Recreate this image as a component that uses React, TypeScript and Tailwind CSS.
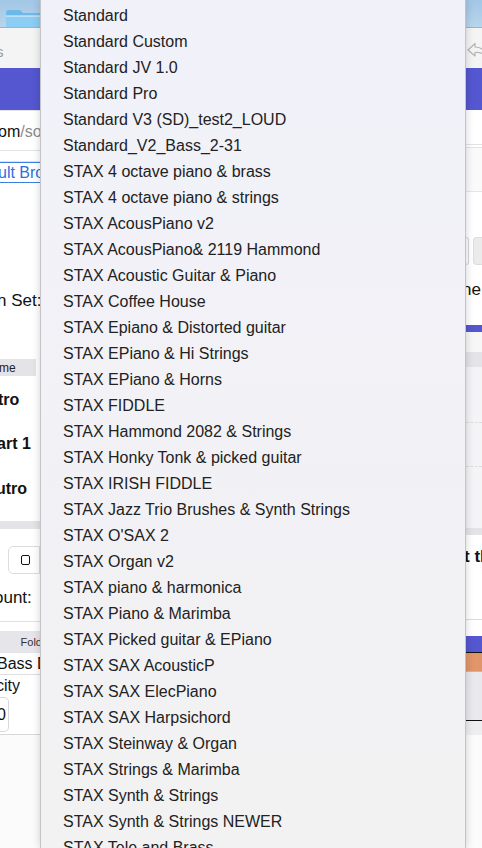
import React from "react";

const items = [
  "Standard",
  "Standard Custom",
  "Standard JV 1.0",
  "Standard Pro",
  "Standard V3 (SD)_test2_LOUD",
  "Standard_V2_Bass_2-31",
  "STAX 4 octave piano & brass",
  "STAX 4 octave piano & strings",
  "STAX AcousPiano v2",
  "STAX AcousPiano& 2119 Hammond",
  "STAX Acoustic Guitar & Piano",
  "STAX Coffee House",
  "STAX Epiano & Distorted guitar",
  "STAX EPiano & Hi Strings",
  "STAX EPiano & Horns",
  "STAX FIDDLE",
  "STAX Hammond 2082 & Strings",
  "STAX Honky Tonk & picked guitar",
  "STAX IRISH FIDDLE",
  "STAX Jazz Trio Brushes & Synth Strings",
  "STAX O'SAX 2",
  "STAX Organ v2",
  "STAX piano & harmonica",
  "STAX Piano & Marimba",
  "STAX Picked guitar & EPiano",
  "STAX SAX AcousticP",
  "STAX SAX ElecPiano",
  "STAX SAX Harpsichord",
  "STAX Steinway & Organ",
  "STAX Strings & Marimba",
  "STAX Synth & Strings",
  "STAX Synth & Strings NEWER",
  "STAX Tele and Brass",
];

function LeftStrip() {
  return (
    <div className="w-[40px] shrink-0 flex flex-col overflow-hidden bg-white text-[16px] text-[#111] whitespace-nowrap">
      <div className="h-[28px] shrink-0 bg-gradient-to-b from-[#a2c6e5] to-[#b8d5eb] border-b border-[#9bb3c6] flex items-end pl-[6px] overflow-hidden">
        <svg width="40" height="17" viewBox="0 0 40 17" className="shrink-0">
          <path d="M0 3 Q0 0 3 0 L14 0 L17 3 L40 3 L40 17 L0 17 Z" fill="#6db8ea" />
          <path d="M0 6 L40 6 L40 17 L0 17 Z" fill="#8ccdf4" />
          <path d="M0 6 L40 6" stroke="#e6f4fc" strokeWidth="1" />
        </svg>
      </div>
      <div className="h-[40px] shrink-0 bg-[#f4f4f4] flex items-end pb-[5px]">
        <span className="-ml-[4px] text-[15px] text-[#9a9a9a]">s</span>
      </div>
      <div className="h-[42px] shrink-0 bg-[#5457cf]" />
      <div className="h-[40px] shrink-0 border-t border-[#e4e4e4] flex items-center pt-[2px]">
        <span className="-ml-[2px]">om<span className="text-[#8a8a8a]">/son</span></span>
      </div>
      <div className="h-[12px] shrink-0 border-t border-[#e2e2e2] border-b border-b-[#e2e2e2]" />
      <div className="h-[21px] shrink-0 border-y border-[#3b7fe0] flex items-center">
        <span className="-ml-[2px] text-[#2f6fdc]">ult Brow</span>
      </div>
      <div className="h-[103px] shrink-0 bg-white" />
      <div className="h-[30px] shrink-0 flex items-center">
        <span className="-ml-[3px] text-[17px]">n Set:</span>
      </div>
      <div className="h-[43px] shrink-0" />
      <div className="h-[17px] shrink-0 bg-[#e3e3e8] w-[36px] flex items-center">
        <span className="-ml-[1px] text-[12px] text-[#222]">me</span>
      </div>
      <div className="h-[145px] shrink-0 flex flex-col pt-[12px] font-bold">
        <div className="h-[46px] -ml-[2px]">tro</div>
        <div className="h-[46px] -ml-[3px]">art 1</div>
        <div className="h-[46px] -ml-[4px]">utro</div>
      </div>
      <div className="h-[8px] shrink-0 bg-[#e3e3e8]" />
      <div className="h-[17px] shrink-0" />
      <div className="h-[28px] shrink-0 ml-[8px] border border-[#dcdcdc] rounded-l-[5px] flex items-center pl-[12px]">
        <div className="w-[9px] h-[10px] border border-[#111] rounded-[2px]" />
      </div>
      <div className="h-[47px] shrink-0 flex items-center">
        <span className="-ml-[6px] text-[17px]">ount:</span>
      </div>
      <div className="h-[10px] shrink-0 border-t border-[#e0e0e0]" />
      <div className="h-[22px] shrink-0 bg-[#e6e6ea] flex items-center justify-end">
        <span className="text-[11px] text-[#333] -mr-[2px]">Fold</span>
      </div>
      <div className="h-[22px] shrink-0 border-b border-[#dedede] flex items-center">
        <span className="-ml-[3px]">Bass Dr</span>
      </div>
      <div className="h-[22px] shrink-0 flex items-center">
        <span className="-ml-[4px]">city</span>
      </div>
      <div className="h-[35px] shrink-0 w-[9px] border border-l-0 border-[#d8d8d8] rounded-r-[5px] flex items-center">
        <span className="-ml-[3px]">0</span>
      </div>
      <div className="h-[3px] shrink-0 border-b border-[#d8d8d8]" />
      <div className="flex-1 bg-[#fbfbfb]" />
    </div>
  );
}

function RightStrip() {
  return (
    <div className="flex-1 flex flex-col overflow-hidden bg-white text-[16px] text-[#111] whitespace-nowrap">
      <div className="h-[28px] shrink-0 bg-gradient-to-b from-[#a2c6e5] to-[#b8d5eb] border-b border-[#9bb3c6]" />
      <div className="h-[40px] shrink-0 bg-[#f4f4f4] flex items-center pt-[4px]">
        <svg width="20" height="16" viewBox="0 0 20 16" className="shrink-0 ml-[1px]">
          <path d="M1 8 L8 1.5 L8 5 Q17 5 19 14 Q14 9.5 8 10.5 L8 14 Z" fill="none" stroke="#b5b5b5" strokeWidth="1.2" strokeLinejoin="round" />
        </svg>
      </div>
      <div className="h-[42px] shrink-0 bg-[#5457cf]" />
      <div className="h-[34px] shrink-0 bg-white" />
      <div className="h-[4px] shrink-0 border-y border-[#e2e2e2]" />
      <div className="h-[44px] shrink-0 bg-[#fafafa] border-b border-[#e6e6e6]" />
      <div className="h-[45px] shrink-0" />
      <div className="h-[28px] shrink-0 flex gap-[4px]">
        <div className="w-[3px] border border-l-0 border-[#d6d6d6] rounded-r-[4px]" />
        <div className="flex-1 bg-[#ebebeb] border border-r-0 border-[#dddddd] rounded-l-[4px]" />
      </div>
      <div className="h-[50px] shrink-0 flex items-center">
        <span className="-ml-[4px] text-[17px]">ne</span>
      </div>
      <div className="h-[10px] shrink-0" />
      <div className="h-[7px] shrink-0 bg-[#5457cf]" />
      <div className="h-[20px] shrink-0 bg-[#f7f7f7]" />
      <div className="h-[15px] shrink-0 bg-[#e3e3e8]" />
      <div className="h-[56px] shrink-0 bg-[#f4f4f6] border-b border-dashed border-[#dcdcdc]" />
      <div className="h-[44px] shrink-0 bg-[#f4f4f6] border-b border-dashed border-[#dcdcdc]" />
      <div className="h-[61px] shrink-0 bg-[#f4f4f6]" />
      <div className="h-[7px] shrink-0 bg-[#e3e3e8]" />
      <div className="h-[44px] shrink-0 flex items-center">
        <span className="-ml-[2px] text-[17px] font-bold">t th</span>
      </div>
      <div className="h-[41px] shrink-0 border-b border-[#dcdcdc]" />
      <div className="h-[16px] shrink-0 bg-white" />
      <div className="h-[17px] shrink-0 bg-[#5457cf] border-b border-[#111]" />
      <div className="h-[19px] shrink-0 bg-[#e0956a] border-b border-[#b9b9c5]" />
      <div className="h-[49px] shrink-0 bg-[#e9e9ed] border-b-[1.5px] border-[#111]" />
      <div className="h-[14px] shrink-0 bg-[#eeeef1]" />
      <div className="flex-1 bg-[#fbfbfb]" />
    </div>
  );
}

export default function App() {
  return (
    <div
      className="w-[482px] h-[848px] flex overflow-hidden bg-white"
      style={{ fontFamily: '"Liberation Sans", Arial, sans-serif' }}
    >
      <LeftStrip />
      <div className="w-[426px] shrink-0 h-[848px] overflow-hidden border-x border-[#c4c4c6] bg-gradient-to-b from-[#f1f1fa] to-[#f2f2f2] shadow-[0_0_8px_rgba(0,0,0,0.18)] z-10 pt-[3px]">
        {items.map((t) => (
          <div key={t} className="h-[26px] flex items-center pl-[22px] text-[16px] text-[#222] whitespace-nowrap">
            {t}
          </div>
        ))}
      </div>
      <RightStrip />
    </div>
  );
}
